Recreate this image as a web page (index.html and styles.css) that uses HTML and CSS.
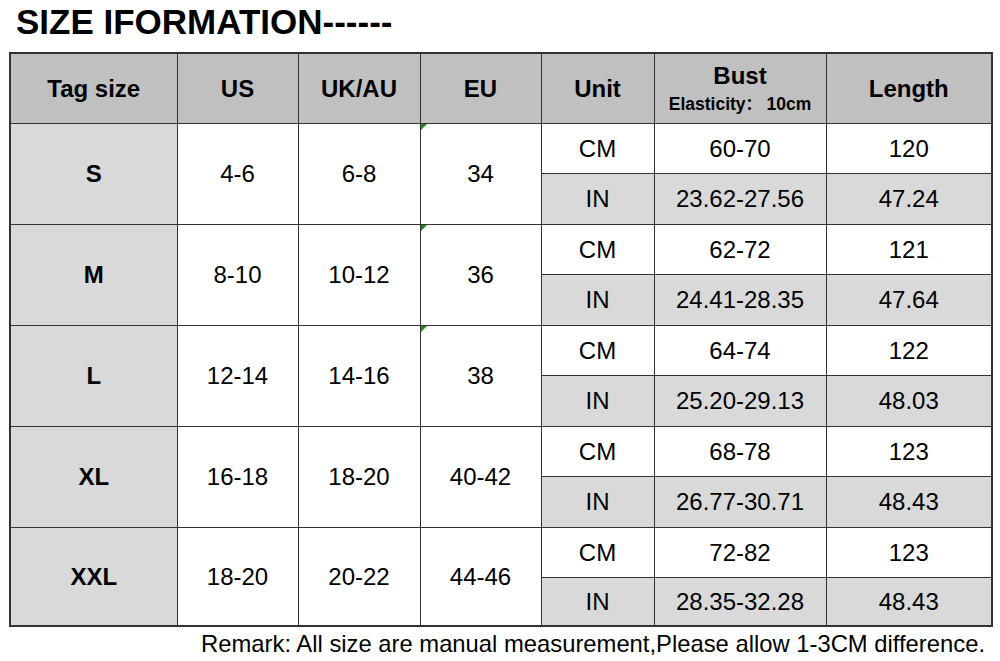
FILE: index.html
```html
<!DOCTYPE html>
<html>
<head>
<meta charset="utf-8">
<link rel="stylesheet" href="styles.css">
</head>
<body>
<div class="page">
  <h1 class="title">SIZE IFORMATION------</h1>
  <table class="size-table">
    <colgroup>
      <col class="c-tag"><col class="c-us"><col class="c-uk"><col class="c-eu"><col class="c-unit"><col class="c-bust"><col class="c-len">
    </colgroup>
    <thead>
      <tr class="head">
        <th>Tag size</th>
        <th>US</th>
        <th>UK/AU</th>
        <th>EU</th>
        <th>Unit</th>
        <th><div class="bust">Bust</div><div class="elastic">Elasticity<span class="colon">：</span> 10cm</div></th>
        <th>Length</th>
      </tr>
    </thead>
    <tbody>
      <tr class="cm"><td rowspan="2" class="tag">S</td><td rowspan="2">4-6</td><td rowspan="2">6-8</td><td rowspan="2" class="eu mark">34</td><td>CM</td><td>60-70</td><td>120</td></tr>
      <tr class="in"><td>IN</td><td>23.62-27.56</td><td>47.24</td></tr>
      <tr class="cm"><td rowspan="2" class="tag">M</td><td rowspan="2">8-10</td><td rowspan="2">10-12</td><td rowspan="2" class="eu mark">36</td><td>CM</td><td>62-72</td><td>121</td></tr>
      <tr class="in"><td>IN</td><td>24.41-28.35</td><td>47.64</td></tr>
      <tr class="cm"><td rowspan="2" class="tag">L</td><td rowspan="2">12-14</td><td rowspan="2">14-16</td><td rowspan="2" class="eu mark">38</td><td>CM</td><td>64-74</td><td>122</td></tr>
      <tr class="in"><td>IN</td><td>25.20-29.13</td><td>48.03</td></tr>
      <tr class="cm"><td rowspan="2" class="tag">XL</td><td rowspan="2">16-18</td><td rowspan="2">18-20</td><td rowspan="2" class="eu">40-42</td><td>CM</td><td>68-78</td><td>123</td></tr>
      <tr class="in"><td>IN</td><td>26.77-30.71</td><td>48.43</td></tr>
      <tr class="cm"><td rowspan="2" class="tag">XXL</td><td rowspan="2">18-20</td><td rowspan="2">20-22</td><td rowspan="2" class="eu">44-46</td><td>CM</td><td>72-82</td><td>123</td></tr>
      <tr class="in last"><td>IN</td><td>28.35-32.28</td><td>48.43</td></tr>
    </tbody>
  </table>
  <p class="remark">Remark: All size are manual measurement,Please allow 1-3CM difference.</p>
</div>
</body>
</html>
```

FILE: styles.css
```css
html, body {
  margin: 0;
  padding: 0;
  background: #ffffff;
}

.page {
  width: 1000px;
  height: 661px;
  padding: 0 0 0 9px;
  box-sizing: border-box;
  font-family: "Liberation Sans", Arial, sans-serif;
  color: #000;
  overflow: hidden;
}

.title {
  margin: 0 0 0 7px;
  height: 52px;
  font-size: 35px;
  font-weight: bold;
  line-height: 44px;
  letter-spacing: 0;
}

.size-table {
  border-collapse: collapse;
  table-layout: fixed;
  width: 984px;
  border: 2px solid #333;
}

.c-tag { width: 167px; }
.c-us { width: 121px; }
.c-uk { width: 122px; }
.c-eu { width: 121px; }
.c-unit { width: 113px; }
.c-bust { width: 172px; }
.c-len { width: 166px; }

.size-table th,
.size-table td {
  border: 1px solid #333;
  padding: 0;
  text-align: center;
  vertical-align: middle;
}

.head th {
  height: 69px;
  background: #c0c0c0;
  font-size: 24px;
  font-weight: bold;
}

.bust {
  font-size: 24px;
  line-height: 24px;
}

.elastic {
  font-size: 17.5px;
  line-height: 18px;
  margin-top: 6px;
  white-space: nowrap;
}

.colon {
  font-family: "Noto Sans CJK SC", sans-serif;
  font-size: 16px;
}

.size-table td {
  font-size: 24px;
  height: 49px;
}

.size-table .in td {
  background: #d9d9d9;
  height: 50px;
}

.size-table .in.last td {
  height: 47px;
}

.size-table td.tag {
  background: #d9d9d9;
  font-weight: bold;
  font-size: 24px;
}

.eu {
  position: relative;
}

.mark::before {
  content: "";
  position: absolute;
  top: 0;
  left: 0;
  width: 0;
  height: 0;
  border-top: 6px solid #1f8a1f;
  border-right: 6px solid transparent;
}

.remark {
  margin: 4px 0 0;
  padding-right: 15px;
  text-align: right;
  font-size: 23.8px;
  line-height: 26px;
}
```
